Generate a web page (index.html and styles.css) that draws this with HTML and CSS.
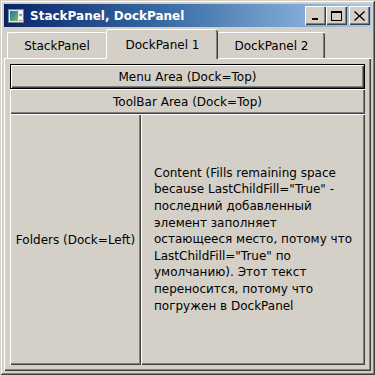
FILE: index.html
```html
<!DOCTYPE html>
<html>
<head>
<meta charset="utf-8">
<link rel="stylesheet" href="styles.css">
</head>
<body>
<div class="window">
  <div class="titlebar">
    <svg class="app-icon" width="16" height="14" viewBox="0 0 16 14">
      <rect x="0.5" y="0.5" width="15" height="13" fill="#e8e8e8" stroke="#808080"/>
      <defs>
        <linearGradient id="pic" x1="0" y1="0" x2="1" y2="1">
          <stop offset="0" stop-color="#2f6fb0"/>
          <stop offset="0.5" stop-color="#3f9a8a"/>
          <stop offset="1" stop-color="#8fc05a"/>
        </linearGradient>
      </defs>
      <rect x="2" y="2" width="8" height="10" fill="url(#pic)"/>
      <rect x="11" y="2" width="3" height="2" fill="#ffffff"/>
      <rect x="11" y="5" width="3" height="2" fill="#a0a0a0"/>
      <rect x="11" y="8" width="3" height="2" fill="#ffffff"/>
      <rect x="11" y="11" width="3" height="1" fill="#a0a0a0"/>
    </svg>
    <span class="title">StackPanel, DockPanel</span>
    <div class="caption-buttons">
      <div class="cap">
        <svg width="9" height="9" viewBox="0 0 9 9"><rect x="1" y="7" width="6" height="2" fill="#000"/></svg>
      </div>
      <div class="cap">
        <svg width="11" height="10" viewBox="0 0 11 10"><rect x="0.5" y="0.5" width="10" height="9" fill="none" stroke="#000"/><rect x="0" y="0" width="11" height="2" fill="#000"/></svg>
      </div>
      <div class="cap cap-close">
        <svg width="11" height="10" viewBox="0 0 11 10"><path d="M1 0 L5.5 4.2 L10 0 L11 1 L6.6 5 L11 9 L10 10 L5.5 5.8 L1 10 L0 9 L4.4 5 L0 1 Z" fill="#000"/></svg>
      </div>
    </div>
  </div>
  <div class="client">
    <div class="tabs">
      <div class="tab tab-first">StackPanel</div>
      <div class="tab tab-selected">DockPanel 1</div>
      <div class="tab tab-last">DockPanel 2</div>
    </div>
    <div class="tabpanel">
      <div class="dock">
        <div class="btn btn-default menu"><span class="bevel">Menu Area (Dock=Top)</span></div>
        <div class="btn toolbar"><span class="bevel">ToolBar Area (Dock=Top)</span></div>
        <div class="fill-row">
          <div class="btn folders"><span class="bevel">Folders (Dock=Left)</span></div>
          <div class="btn content"><span class="bevel"><span class="content-text">Content (Fills remaining space<br>because LastChildFill="True" -<br>последний добавленный<br>элемент заполняет<br>остающееся место, потому что<br>LastChildFill="True" по<br>умолчанию). Этот текст<br>переносится, потому что<br>погружен в DockPanel</span></span></div>
        </div>
      </div>
    </div>
  </div>
</div>
</body>
</html>
```

FILE: styles.css
```css
html, body {
  margin: 0;
  padding: 0;
  background: #d4d0c8;
}

body {
  font-family: "DejaVu Sans", Verdana, sans-serif;
  font-size: 12px;
  color: #000;
}

.window {
  width: 375px;
  height: 375px;
  box-sizing: border-box;
  padding: 4px;
  background: #d4d0c8;
  box-shadow: inset 1px 1px 0 #d4d0c8, inset -1px -1px 0 #404040,
              inset 2px 2px 0 #ffffff, inset -2px -2px 0 #808080;
  display: flex;
  flex-direction: column;
}

.titlebar {
  height: 23px;
  flex: none;
  display: flex;
  align-items: center;
  padding: 0 1px 0 4px;
  background: linear-gradient(to right, #0a246a 0%, #3a6ea5 45%, #a6caf0 100%);
}

.app-icon {
  flex: none;
  display: block;
}

.title {
  margin-left: 6px;
  color: #fff;
  font-weight: bold;
  font-size: 12px;
  white-space: nowrap;
  flex: 1;
}

.caption-buttons {
  display: flex;
  align-items: center;
}

.cap {
  width: 21px;
  height: 19px;
  box-sizing: border-box;
  background: #d4d0c8;
  box-shadow: inset 1px 1px 0 #ffffff, inset -1px -1px 0 #404040,
              inset -2px -2px 0 #808080;
  display: flex;
  align-items: center;
  justify-content: center;
}

.cap svg {
  display: block;
}

.cap-close {
  margin-left: 2px;
}

.client {
  flex: 1;
  display: flex;
  flex-direction: column;
  min-height: 0;
}

.tabs {
  height: 31px;
  flex: none;
  display: flex;
  align-items: flex-end;
  padding-left: 3px;
}

.tab {
  height: 26px;
  box-sizing: border-box;
  display: flex;
  align-items: center;
  justify-content: center;
  white-space: nowrap;
  border-top: 1px solid #fff;
  border-radius: 2px 2px 0 0;
  padding-top: 1px;
}

.tab-first {
  width: 99px;
  border-left: 1px solid #fff;
}

.tab-selected {
  width: 112px;
  height: 30px;
  margin-bottom: -1px;
  position: relative;
  z-index: 1;
  background: #d4d0c8;
  border-left: 1px solid #fff;
  box-shadow: inset -1px 0 0 #404040, inset -2px 0 0 #808080;
  padding-bottom: 1px;
}

.tab-last {
  width: 107px;
  box-shadow: inset -1px 0 0 #404040, inset -2px 0 0 #808080;
}

.tabpanel {
  flex: 1;
  min-height: 0;
  box-sizing: border-box;
  padding: 6px;
  box-shadow: inset 1px 1px 0 #ffffff, inset -1px -1px 0 #404040,
              inset -2px -2px 0 #808080;
  display: flex;
}

.dock {
  flex: 1;
  display: flex;
  flex-direction: column;
  min-width: 0;
}

.btn {
  box-sizing: border-box;
  display: flex;
  background: #d4d0c8;
}

.bevel {
  flex: 1;
  display: flex;
  align-items: center;
  justify-content: center;
  box-shadow: inset 1px 1px 0 #ffffff, inset -1px -1px 0 #404040,
              inset -2px -2px 0 #808080;
  white-space: nowrap;
}

.btn-default {
  border: 1px solid #000;
}

.menu {
  height: 25px;
  flex: none;
}

.toolbar {
  height: 25px;
  flex: none;
}

.fill-row {
  flex: 1;
  display: flex;
  min-height: 0;
}

.folders {
  width: 131px;
  flex: none;
}

.content {
  flex: 1;
}

.content-text {
  display: block;
  line-height: 16.6px;
  text-align: left;
}
```
